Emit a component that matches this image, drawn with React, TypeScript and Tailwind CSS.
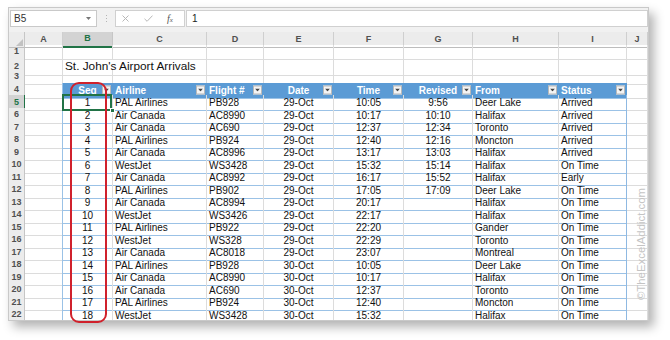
import React from "react";

const COLS = ["A", "B", "C", "D", "E", "F", "G", "H", "I", "J"];
const GRID =
  "grid grid-cols-[16px_38px_50px_94px_57px_70px_70px_69px_86px_68px_21px]";

type Flight = [string, string, string, string, string, string, string, string];

const flights: Flight[] = [
  ["1", "PAL Airlines", "PB928", "29-Oct", "10:05", "9:56", "Deer Lake", "Arrived"],
  ["2", "Air Canada", "AC8990", "29-Oct", "10:17", "10:10", "Halifax", "Arrived"],
  ["3", "Air Canada", "AC690", "29-Oct", "12:37", "12:34", "Toronto", "Arrived"],
  ["4", "PAL Airlines", "PB924", "29-Oct", "12:40", "12:16", "Moncton", "Arrived"],
  ["5", "Air Canada", "AC8996", "29-Oct", "13:17", "13:03", "Halifax", "Arrived"],
  ["6", "WestJet", "WS3428", "29-Oct", "15:32", "15:14", "Halifax", "On Time"],
  ["7", "Air Canada", "AC8992", "29-Oct", "16:17", "15:52", "Halifax", "Early"],
  ["8", "PAL Airlines", "PB902", "29-Oct", "17:05", "17:09", "Deer Lake", "On Time"],
  ["9", "Air Canada", "AC8994", "29-Oct", "20:17", "", "Halifax", "On Time"],
  ["10", "WestJet", "WS3426", "29-Oct", "22:17", "", "Halifax", "On Time"],
  ["11", "PAL Airlines", "PB922", "29-Oct", "22:20", "", "Gander", "On Time"],
  ["12", "WestJet", "WS328", "29-Oct", "22:29", "", "Toronto", "On Time"],
  ["13", "Air Canada", "AC8018", "29-Oct", "23:07", "", "Montreal", "On Time"],
  ["14", "PAL Airlines", "PB928", "30-Oct", "10:05", "", "Deer Lake", "On Time"],
  ["15", "Air Canada", "AC8990", "30-Oct", "10:17", "", "Halifax", "On Time"],
  ["16", "Air Canada", "AC690", "30-Oct", "12:37", "", "Toronto", "On Time"],
  ["17", "PAL Airlines", "PB924", "30-Oct", "12:40", "", "Moncton", "On Time"],
  ["18", "WestJet", "WS3428", "30-Oct", "15:32", "", "Halifax", "On Time"],
];

const headers = ["Seq", "Airline", "Flight #", "Date", "Time", "Revised", "From", "Status"];

// per table column: true = centred, false = left
const centred = [true, false, false, true, true, true, false, false];

const FilterButton = () => (
  <span className="absolute right-[1px] top-1/2 -translate-y-1/2 flex h-[9px] w-[9px] items-center justify-center border border-[#b9b9b9] bg-[#f4f4f4]">
    <svg width="5" height="3" viewBox="0 0 5 3">
      <path d="M0 0h5L2.5 3z" fill="#444" />
    </svg>
  </span>
);

function Cell({ row, col }: { row: number; col: number }) {
  const t = col - 1; // index inside table
  const inTable = row >= 4 && t >= 0 && t <= 7;
  const align = centred[t] ? "justify-center" : "justify-start pl-[2px]";

  if (inTable && row === 4) {
    return (
      <div
        className={`relative flex items-center ${align} border-r border-b border-r-[#5b9bd5] border-b-[#9bc2e6] bg-[#5b9bd5] text-[10px] font-bold text-white`}
      >
        {headers[t]}
        <FilterButton />
      </div>
    );
  }

  if (inTable) {
    const value = flights[row - 5][t];
    const selected = row === 5 && col === 1;
    return (
      <div
        className={`relative flex items-center ${align} whitespace-nowrap border-r border-b border-b-[#9bc2e6] ${
          t === 7 ? "border-r-[#8fb9e2]" : "border-r-[#dcdcdc]"
        } text-[10px] text-[#111]`}
      >
        {value}
        {selected && (
          <>
            <span className="absolute -left-[1px] -top-[1px] -right-[0px] -bottom-[1px] z-10 border-2 border-[#217346]" />
            <span className="absolute -right-[3px] -bottom-[3px] z-10 h-[5px] w-[5px] border border-white bg-[#217346]" />
          </>
        )}
      </div>
    );
  }

  if (row === 2 && col === 1) {
    return (
      <div className="relative z-10 flex items-center border-b border-b-[#dcdcdc] pl-[2px] whitespace-nowrap text-[11.8px] text-[#111]">
        St. John's Airport Arrivals
      </div>
    );
  }

  const rightBlue = row >= 4 && col === 0;
  const bottomBlue = row === 3 && col >= 1 && col <= 8;
  return (
    <div
      className={`border-r border-b ${rightBlue ? "border-r-[#9bc2e6]" : "border-r-[#dcdcdc]"} ${
        bottomBlue ? "border-b-[#5b9bd5]" : "border-b-[#dcdcdc]"
      }`}
    />
  );
}

function SheetRow({ n }: { n: number }) {
  const sel = n === 5;
  return (
    <div className={`${GRID} h-[12.5px]`}>
      <div
        className={`flex items-center justify-center border-r border-b text-[9px] font-bold ${
          sel
            ? "bg-[#d3d3d3] text-[#217346] border-r-[#217346] border-b-[#c8c8c8]"
            : "bg-[#ececec] text-[#505050] border-r-[#c6c6c6] border-b-[#d8d8d8]"
        }`}
      >
        {n}
      </div>
      {COLS.map((c, i) => (
        <Cell key={c} row={n} col={i} />
      ))}
    </div>
  );
}

function ColumnHeaders() {
  return (
    <div className={`${GRID} h-[13px] bg-[#ececec]`}>
      <div className="relative border-r border-b border-r-[#c6c6c6] border-b-[#bdbdbd]">
        <svg className="absolute right-[1px] bottom-[1px]" width="7" height="7" viewBox="0 0 7 7">
          <path d="M7 0v7H0z" fill="#c2c2c2" />
        </svg>
      </div>
      {COLS.map((c) =>
        c === "B" ? (
          <div
            key={c}
            className="flex items-center justify-center border-r border-b-2 border-r-[#c6c6c6] border-b-[#217346] bg-[#d3d3d3] text-[9px] font-bold text-[#217346]"
          >
            {c}
          </div>
        ) : (
          <div
            key={c}
            className="flex items-center justify-center border-r border-b border-r-[#cfcfcf] border-b-[#bdbdbd] text-[9px] font-bold text-[#505050]"
          >
            {c}
          </div>
        )
      )}
    </div>
  );
}

function FormulaBar() {
  return (
    <div className="flex h-[24px] items-start bg-[#f1f1f1] pt-[2px]">
      <div className="ml-[1px] flex h-[17px] w-[87px] items-center justify-between border border-[#c9c9c9] bg-white pl-[3px] pr-[5px] text-[10px] text-[#333]">
        <span>B5</span>
        <svg width="5" height="3" viewBox="0 0 5 3">
          <path d="M0 0h5L2.5 3z" fill="#777" />
        </svg>
      </div>
      <div className="flex h-[17px] w-[18px] flex-col items-center justify-center gap-[2px]">
        <span className="h-[1px] w-[1px] bg-[#b5b5b5]" />
        <span className="h-[1px] w-[1px] bg-[#b5b5b5]" />
        <span className="h-[1px] w-[1px] bg-[#b5b5b5]" />
      </div>
      <div className="flex h-[17px] w-[70px] items-center border border-[#d0d0d0] bg-white">
        <svg className="ml-[6px]" width="7" height="7" viewBox="0 0 7 7">
          <path d="M0.5 0.5l6 6M6.5 0.5l-6 6" stroke="#b8b8b8" strokeWidth="1" />
        </svg>
        <svg className="ml-[15px]" width="9" height="7" viewBox="0 0 9 7">
          <path d="M0.5 3.8l2.6 2.5L8.5 0.6" stroke="#b8b8b8" strokeWidth="1" fill="none" />
        </svg>
        <span className="ml-[14px] font-['Liberation_Serif',serif] text-[10px] italic text-[#555]">
          f<span className="text-[7px]">x</span>
        </span>
      </div>
      <div className="ml-[1px] flex h-[17px] flex-1 items-center border border-[#d0d0d0] bg-white pl-[5px] text-[10px] text-[#222]">
        1
      </div>
    </div>
  );
}

export default function App() {
  const rows = Array.from({ length: 22 }, (_, i) => i + 1);
  return (
    <div className="relative h-[340px] w-[670px] overflow-hidden bg-white font-['Liberation_Sans',Arial,sans-serif]">
      <div className="ml-[8px] mt-[7px] h-[314px] w-[641px] overflow-hidden border border-[#c9c9c9] bg-white shadow-[5px_6px_10px_rgba(0,0,0,0.3)]">
        <FormulaBar />
        <ColumnHeaders />
        {rows.map((n) => (
          <SheetRow key={n} n={n} />
        ))}
      </div>

      {/* red highlight around the Seq column */}
      <div className="absolute left-[70px] top-[82px] z-20 h-[241px] w-[37px] rounded-[9px] border-2 border-[#d0212c]" />

      {/* watermark */}
      <div className="absolute left-[642px] top-[244px] z-20 -translate-x-1/2 -translate-y-1/2 -rotate-90 whitespace-nowrap text-[11.4px] text-[#c4c4c4]">
        ©TheExcelAddict.com
      </div>
    </div>
  );
}
